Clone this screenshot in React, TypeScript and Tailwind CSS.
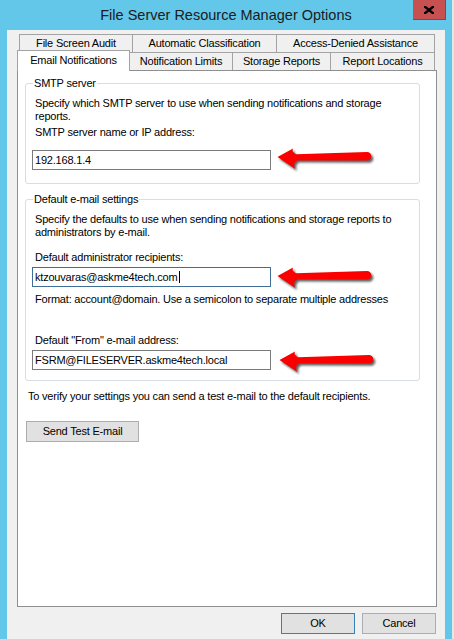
import React from "react";

const ARROW =
  "M1.5,11 L17,2.6 Q15.5,6.2 20,8.3 L91,6 A4.3,4.3 0 0 1 91,14.6 L21,14.4 Q16.5,16.8 19,22.7 Z";

function Arrow({ id, className }: { id: string; className: string }) {
  return (
    <svg width="100" height="28" viewBox="0 0 100 28" className={className}>
      <defs>
        <filter id={id} x="-10%" y="-40%" width="130%" height="200%">
          <feGaussianBlur stdDeviation="1.1" />
        </filter>
      </defs>
      <path d={ARROW} transform="translate(2,2.2)" fill="#1e1e1e" opacity="0.7" filter={`url(#${id})`} />
      <path d={ARROW} fill="#fb0000" />
    </svg>
  );
}

function BackTab({ w, last, children }: { w: string; last?: boolean; children: React.ReactNode }) {
  return (
    <div
      className={`${w} flex h-[18px] items-center justify-center border-t border-l border-[#a3a3a3] bg-[#f0f0f0] ${
        last ? "border-r" : ""
      }`}
    >
      {children}
    </div>
  );
}

export default function App() {
  return (
    <div className="flex h-[639px] w-[454px] overflow-hidden font-['Liberation_Sans',Arial,sans-serif] text-[11px] leading-[13px] tracking-[-0.2px] text-black">
      <div className="flex w-[452px] flex-col bg-[#63c7ea]">
        {/* title bar */}
        <div className="grid h-[30px] shrink-0 grid-cols-[1fr_auto_1fr]">
          <div />
          <div className="self-center text-[14.5px] leading-[17px] tracking-normal text-[#1b1b1b]">
            File Server Resource Manager Options
          </div>
          <div className="flex justify-end pr-[6px]">
            <div className="flex h-[20px] w-[33px] items-center justify-center border-r border-b border-[#9a3c3c] bg-[#c75050]">
              <svg width="10" height="8" viewBox="0 0 10 8">
                <path d="M1,0.8 L9,7.2 M9,0.8 L1,7.2" stroke="#000" strokeWidth="2.4" strokeLinecap="square" />
              </svg>
            </div>
          </div>
        </div>

        {/* client area */}
        <div className="mx-[7px] flex-1 bg-[#f0f0f0] pt-[4px] pl-[10px]">
          <div className="w-[420px]">
            {/* back tab row */}
            <div className="ml-[2px] flex h-[18px]">
              <BackTab w="w-[113px]">File Screen Audit</BackTab>
              <BackTab w="w-[144px]">Automatic Classification</BackTab>
              <BackTab w="w-[159px]" last>
                Access-Denied Assistance
              </BackTab>
            </div>
            {/* front tab row */}
            <div className="flex h-[18px] items-start">
              <div className="relative z-10 -mt-[2px] -mr-[1px] flex h-[21px] w-[113px] justify-center border-t border-r border-l border-[#a3a3a3] bg-white pt-[3px]">
                Email Notifications
              </div>
              <BackTab w="w-[103px]">Notification Limits</BackTab>
              <BackTab w="w-[98px]">Storage Reports</BackTab>
              <BackTab w="w-[105px]" last>
                Report Locations
              </BackTab>
            </div>

            {/* panel */}
            <div className="flex h-[537px] flex-col border border-[#8f8f8f] bg-white">
              <fieldset className="mt-[6px] ml-[7px] w-[395px] rounded-[3px] border border-[#d8dde3] px-[7px] pb-[13px]">
                <legend className="px-[1px]">SMTP server</legend>
                <div className="mt-[7px] pl-[2px]">
                  Specify which SMTP server to use when sending notifications and storage reports.
                </div>
                <div className="mt-[3px] pl-[2px]">SMTP server name or IP address:</div>
                <div className="mt-[11px] -ml-[1px] flex items-start">
                  <div className="flex h-[20px] w-[239px] items-center border border-[#7a7a7a] bg-white pl-[2px]">
                    192.168.1.4
                  </div>
                  <Arrow id="a1" className="-mt-[4px] -mb-[4px] ml-[5px]" />
                </div>
              </fieldset>

              <fieldset className="mt-[9px] ml-[7px] w-[395px] rounded-[3px] border border-[#d8dde3] px-[7px] pb-[10px]">
                <legend className="px-[1px]">Default e-mail settings</legend>
                <div className="mt-[7px] pl-[2px]">
                  Specify the defaults to use when sending notifications and storage reports to administrators by
                  e-mail.
                </div>
                <div className="mt-[12px] pl-[2px]">Default administrator recipients:</div>
                <div className="mt-[3px] -ml-[1px] flex items-start">
                  <div className="flex h-[20px] w-[239px] items-center border border-[#3f6f99] bg-white pl-[2px]">
                    ktzouvaras@askme4tech.com
                    <span className="ml-[1px] h-[12px] w-[1px] bg-black" />
                  </div>
                  <Arrow id="a2" className="-mt-[2px] -mb-[6px] ml-[5px]" />
                </div>
                <div className="mt-[6px] pl-[2px]">
                  Format: account@domain. Use a semicolon to separate multiple addresses
                </div>
                <div className="mt-[28px] pl-[2px]">Default "From" e-mail address:</div>
                <div className="mt-[3px] -ml-[1px] flex items-start">
                  <div className="flex h-[20px] w-[239px] items-center border border-[#7a7a7a] bg-white pl-[2px]">
                    FSRM@FILESERVER.askme4tech.local
                  </div>
                  <Arrow id="a3" className="-mt-[1px] -mb-[7px] ml-[7px]" />
                </div>
              </fieldset>

              <div className="mt-[9px] ml-[10px]">
                To verify your settings you can send a test e-mail to the default recipients.
              </div>
              <div className="mt-[18px] ml-[8px] flex h-[21px] w-[113px] items-center justify-center border border-[#adadad] bg-[#e1e1e1]">
                Send Test E-mail
              </div>
            </div>

            {/* dialog buttons */}
            <div className="mt-[6px] flex justify-end gap-[7px] pr-[1px]">
              <div className="flex h-[21px] w-[74px] items-center justify-center border border-[#3c7fb1] bg-[#e1e1e1]">
                OK
              </div>
              <div className="flex h-[21px] w-[74px] items-center justify-center border border-[#adadad] bg-[#e1e1e1]">
                Cancel
              </div>
            </div>
          </div>
        </div>
      </div>
      <div className="w-[2px] bg-[#e6e6e6]" />
    </div>
  );
}
